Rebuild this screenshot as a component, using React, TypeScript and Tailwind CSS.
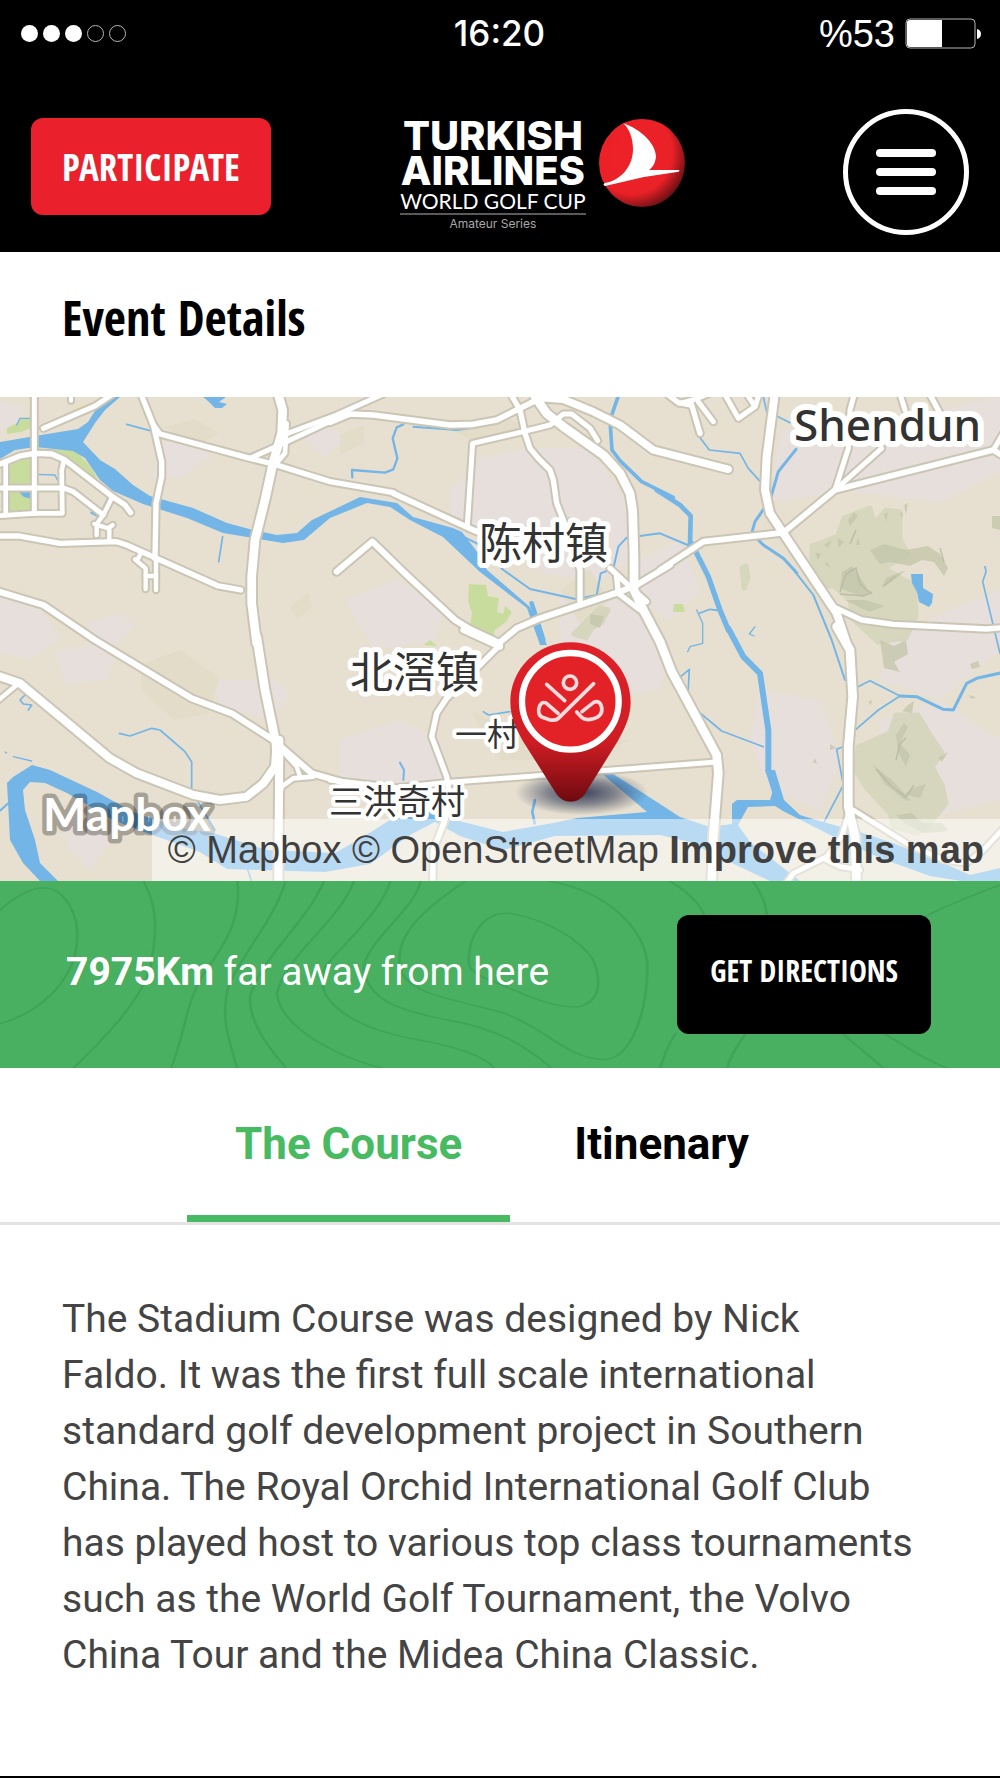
const condensed = "font-['Open_Sans_Condensed','Roboto_Condensed',Roboto,sans-serif] font-bold";

type Tile = "a" | "b" | "c" | "d" | "e" | "f";
type Line = [Tile, number, string];

// The map is stored as six tiles, drawn at three units to the pixel.
const origin: Record<Tile, string> = {
  a: "translate(0 390) scale(.33333)",
  b: "translate(330 390) scale(.33333)",
  c: "translate(660 390) scale(.33333)",
  d: "translate(0 630) scale(.33333)",
  e: "translate(330 630) scale(.33333)",
  f: "translate(660 630) scale(.33333)",
};

const roads: Line[] = [
  ["a", 13, "103,0 103,370"],
  ["a", 14, "0,222 60,198 105,190 155,192 195,210 340,322 375,345 392,368"],
  ["a", 13, "0,294 190,294 220,305 310,375"],
  ["a", 12, "17,220 17,370"],
  ["a", 12, "0,377 105,370 187,370 185,240 192,212"],
  ["a", 14, "-20,438 55,438 180,460 350,455 380,465 655,588 722,600"],
  ["a", 11, "335,325 310,375 290,402 290,435"],
  ["a", 11, "283,402 325,415 338,405"],
  ["a", 11, "328,412 328,450"],
  ["a", 11, "425,485 412,510 405,508 437,535 437,597"],
  ["a", 11, "468,510 468,600"],
  ["a", 11, "437,558 468,558"],
  ["a", 14, "420,5 460,105 485,215 485,260 468,340 465,505"],
  ["a", 13, "130,115 285,48 335,15"],
  ["a", 10, "213,0 213,32"],
  ["a", 14, "460,105 480,132 750,205 830,225 990,275 1180,308"],
  ["a", 24, "828,-10 848,60 845,130 820,215 795,330 765,450 755,560 755,640 770,760"],
  ["a", 13, "750,205 850,160 1020,80"],
  ["a", 13, "850,135 1010,75 1150,12"],
  ["a", 12, "860,100 855,190 825,225"],
  ["b", 15, "0,97 60,72 130,75 360,105 430,103 500,90 560,60 620,30 700,5"],
  ["b", 16, "20,545 127,455 230,555 375,690 420,718 510,760"],
  ["b", 16, "500,765 560,715 630,685 870,605 920,585 1020,525"],
  ["b", 15, "190,310 430,420 480,440"],
  ["b", 14, "535,0 570,60 585,130 600,175 625,205 660,240 670,270 680,340 700,390 750,540 750,635"],
  ["b", 13, "412,405 428,160 580,125 660,105 700,72 725,72 780,115 803,152"],
  ["b", 24, "615,20 650,70 700,110 820,195 870,250 900,310 908,360 912,500 912,600 940,660 990,755"],
  ["b", 20, "620,22 700,28 790,65 870,105 930,150 970,180 1195,238"],
  ["b", 14, "840,535 900,590 950,635"],
  ["b", 14, "860,560 865,610 930,660"],
  ["c", 15, "0,540 130,455 370,428 525,300 1000,180 1040,205"],
  ["c", 13, "525,300 565,175 570,60 585,5"],
  ["c", 13, "525,300 665,175"],
  ["c", 13, "1000,180 1030,130"],
  ["c", 13, "735,60 718,5"],
  ["c", 14, "805,5 840,70"],
  ["c", 14, "25,15 55,38 95,45 120,130"],
  ["c", 13, "60,40 100,30 160,5"],
  ["c", 13, "115,35 160,95"],
  ["c", 13, "190,5 235,85 285,50 300,5"],
  ["c", 12, "255,5 285,50"],
  ["c", 22, "345,5 320,200 315,300 330,370 370,430 530,670 560,760"],
  ["c", 14, "530,655 605,690 700,703 980,717 1040,712"],
  ["d", 16, "-20,-120 130,-75 285,30 575,205 695,250 820,330 935,430 1040,460"],
  ["d", 22, "-20,133 60,160 330,385 410,430 580,495 660,510 740,500 790,460 825,410 830,340"],
  ["d", 24, "770,20 795,180 828,340 832,420"],
  ["d", 22, "838,330 835,760"],
  ["d", 12, "835,520 845,470 880,445 940,440"],
  ["d", 11, "-10,215 50,165"],
  ["d", 11, "845,360 890,410 900,440"],
  ["e", 13, "0,450 200,473 360,457 1160,396"],
  ["e", 16, "400,0 510,50"],
  ["e", 14, "510,45 350,205 320,250 305,320 350,440 360,500 345,570 310,660 308,760"],
  ["e", 24, "990,35 1025,125 1160,375 1165,430 1150,620 1145,760"],
  ["f", 24, "530,-10 570,60 578,200 565,350 565,530 585,620 590,760"],
  ["f", 12, "580,540 740,640 850,690 920,700 970,660 1040,585"],
  ["f", 12, "565,550 545,620 500,680 400,730 375,765"],
  ["f", 12, "490,685 540,710 600,720"],
];

const streams: Line[] = [
  ["a", 5, "380,103 450,122"],
  ["a", 5, "668,440 656,515"],
  ["a", 4, "50,105 60,85 90,85"],
  ["a", 4, "110,253 165,255 172,270"],
  ["a", 8, "325,325 298,380 275,368"],
  ["a", 5, "745,195 815,165"],
  ["b", 7, "220,103 200,112 188,145 202,205 190,238 165,248 66,240 67,262"],
  ["b", 6, "250,110 380,120 440,112 560,65"],
  ["b", 11, "866,15 840,90 846,180 870,212 935,275 1030,322"],
  ["b", 6, "370,425 440,460 520,540 600,597 740,628 800,615 812,550 850,535 865,470 890,443 990,430 1080,468"],
  ["c", 14, "-10,300 60,345 92,378 90,465"],
  ["c", 16, "95,460 145,560 180,660 205,720"],
  ["c", 5, "25,20 45,45 95,55 110,130 148,180 240,190 265,235 298,272"],
  ["c", 9, "408,178 355,245 330,330 285,395 275,430 310,465 370,505 410,548"],
  ["c", 6, "405,545 460,615 515,750 555,870"],
  ["c", 5, "310,20 320,65 350,78 390,98"],
  ["c", 5, "975,530 978,545 968,575 1020,790"],
  ["c", 4, "110,660 128,700 128,760 90,770 83,785"],
  ["c", 5, "118,670 150,658 180,662"],
  ["c", 4, "285,710 268,732 282,738"],
  ["d", 5, "358,310 390,318 455,295 480,300 555,365 575,395 575,485 645,600"],
  ["d", 4, "15,366 20,369"],
  ["d", 4, "40,380 95,393"],
  ["d", 5, "75,195 60,210 70,222 95,225 85,240"],
  ["d", 6, "0,542 25,520"],
  ["d", 5, "740,710 755,755"],
  ["e", 14, "605,-80 640,30"],
  ["e", 8, "615,510 607,545 614,580"],
  ["e", 5, "460,245 475,255 540,245"],
  ["e", 6, "210,398 222,420 220,450"],
  ["f", 18, "205,-5 250,80 300,130 325,300 325,420 350,500"],
  ["f", 5, "38,160 88,118 84,190"],
  ["f", 5, "100,232 185,303 310,350"],
  ["f", 5, "585,175 630,152 720,198 655,240 580,305"],
  ["f", 9, "720,198 770,200 850,238 880,240 920,160 950,145 1040,125"],
  ["f", 5, "555,348 530,358 550,465 490,580"],
];

function Lines({ items, extra }: { items: Line[]; extra: number }) {
  return (
    <g fill="none" strokeLinecap="round" strokeLinejoin="round">
      {items.map(([tile, width, points], i) => (
        <polyline key={i} transform={origin[tile]} strokeWidth={width + extra} points={points} />
      ))}
    </g>
  );
}

function Terrain() {
  return (
    <g>
      <g fill="#e7dfdb">
        <path d="M0 402l25 4-10 20-15 4zM160 445l30-10 20 20-28 22-30 2zM300 432l24-12 20 20-20 18zM0 595l40 14 20 30-30 20-30-6zM90 622l30-8 15 12-20 20-30 6zM55 650l40-4 20 14-10 20-40 4z" />
        <path d="M470 460l60-12 60 0 40 60 4 50-30 22-60-6-50-40-30-40zM450 490l30-30 40 30-20 30-50 20zM345 600l50-20 50 20-10 40-60 10zM560 590l60 10 50 40-10 50-70 10-30-50z" />
        <path d="M780 430l110-10 110-23v75l-60 30-90-10-80 10zM890 640l60-30 50-20v60l-60 50-60-20zM760 690l60 10 20 60-20 50-50-20-20-50zM880 720l60-20 60 40v60l-80 20-40-30zM640 560l40-20 20 50-30 30-30-20zM340 740l60-20 40 20 10 40-80 30-30-30zM60 820l30-10 20 30-20 30-20-20zM215 680l60 0 15 15-20 25-50-14z" />
      </g>
      <g fill="#e2dcc8">
        <path d="M140 665l40-15 40 28-12 36-34 6-32-30zM165 427l30-8 24 14-24 14zM290 607l18-14 4 14-14 12zM450 430l60-10 30 10-60 14zM340 435l24-10 0 18-24 12zM470 710l60 30 100 0-50 20-80 0zM560 590l30-20 20 30-30 24z" />
      </g>
      <g fill="#c8dd9d">
        <path d="M7 428l10-5 4-5 10 0v10l-10 4-14 2zM8 462l24-9v32H8zM9 491h23v19l-23 1zM33 448l42 2 15 16 12 20-20-14-20-14-29-1zM469 584l17 1 2 11 11 2-2 14 6 2 2-8 7 6-6 10-11 8-2 8-13-3-10-8 2-14-4-12zM424 645l6-5 7 6zM674 604l9 0 2 8-12 0zM568 517l6 1v4h-6z" />
      </g>
      <path d="M72 408l20-6 14-4-4 6-24 8z" fill="#ebe2b4" />
      <g fill="#d2d5b8" stroke="#d2d5b8" strokeWidth="5" strokeLinejoin="round" opacity=".8">
        <path d="M812 546l26-10 6-18 26-10 4 16 12-14 14 2 0 28 8 14-24 14 20 12 10 4 2 32-10 22-28 4-24-22-4-20-16-14-10 0-12-16z" />
        <path d="M858 747l32-14 6-18 22 0 12 20 12 18-10 14 10 18 4 18-14 18-14 12-24-6-4-14-24-26-10-16z" />
        <path d="M574 634l18-18 8-8 8 2-6 12-10 6-6 10zM742 568l4-2 2 12-4 10z" />
      </g>
      <g fill="#c3c6aa" opacity=".75">
        <path d="M842 572l10-6 10 14 8 14-10 2-20-8zM854 512l4 4-8 10-2-6zM884 514l4-2-2 10zM838 538l6 4-6 6zM870 550l14-6 22 6 22-4 12 8 8 14-4 8-10-14-12-2-12 6-20-4-10 2zM906 570l-10 8-14 10 4-10zM845 600l20 0 20 6-16 6zM896 735l8-12 4 4-8 16 10 12-4 12-8-16zM873 765l20 16 18 20-6-1-20-16zM914 788l12-4-6 14-16-4zM938 758l10-6-6 10zM896 815l16-2 10 10 20 0 6 8-24 2-20-10zM880 640l14 6 12-6 2 14-14 8 6 10-16-4zM590 614l14 2-4 12-10-4zM908 705l6-4-2 12-10-2zM992 516l8 0v14l-8-2z" />
        <path d="M824 545l8-5-4 8zM904 505l4-2-2 12zM900 512l3 1-1 6zM815 552l6 2-3 6zM856 545l2-8 2 8zM876 556l10-4-12 8zM827 562l4 6-6-4zM970 664l8-3 2 6-8 2zM976 697l-8-2 4 4zM868 702l4-2-1 5zM813 762l2-4 2 6zM894 576l6-4-10 10zM830 744l6 4-6 2z" />
      </g>
      <g fill="none" stroke="#b5b8a4" strokeWidth="1.5" opacity=".8">
        <path d="M840 592l6-18 10-6 4 16 12 10M840 594l24 2 8-4M876 769l14 16 16 12 8-12M896 760l4-16 6-6M856 530l-6 14M884 586l12-10M940 548l4 14" />
      </g>
    </g>
  );
}

function Water() {
  return (
    <g fill="#73b5e6">
      <path d="M0 442L35 436 78 429 88 422 100 403 107 397H120L105 410 95 423 83 442 100 460 115 469 133 485 150 496 193 508 227 523 253 530 277 535 297 533 312 520 360 497 397 503 413 517 453 528 462 532 478 553 487 570 530 607 547 645 540 645 527 608 480 572 443 537 410 520 390 507 367 503 330 518 304 540 283 543 253 538 223 533 187 518 143 504 113 491 100 480 85 458 73 451 35 447 15 450 0 459z" />
      <path d="M7 783L13 777 32 765 50 770 97 792 133 812 180 828 213 833 267 850 335 853 363 837 390 820 430 812 463 822 503 832 553 823 577 818 647 812 600 772 610 772 643 793 680 817 710 827 732 824V804L737 800 770 800 773 790 765 770 775 770 784 800 800 815 823 822 860 832 893 843 943 863 970 875 1000 868V884H980L930 876 880 858 830 835 783 811 775 806 748 807 738 825 750 842 800 881H770L715 855 690 842 660 835 555 836 503 850 460 836 435 822 410 835 370 864 325 872 227 869 200 852 147 833 113 820 67 793 45 783 30 782 23 790 25 810 35 840 40 863 58 881H40L23 863 10 840z" />
      <path d="M203 397H226L219 402 227 404 222 408 215 408 208 401zM911 574H923V588L933 594 932 603 929 607 919 602 917 592 912 583zM18 491l14 0v8l-8-2z" />
    </g>
  );
}

function Pin() {
  return (
    <g transform={origin.e}>
      <defs>
        <linearGradient id="pin" x1="0" y1="0" x2="0" y2="1">
          <stop offset="0" stopColor="#e0212a" />
          <stop offset=".62" stopColor="#cf1d24" />
          <stop offset="1" stopColor="#6d0a0f" />
        </linearGradient>
        <radialGradient id="shade">
          <stop offset="0" stopColor="#1c2748" stopOpacity=".85" />
          <stop offset=".5" stopColor="#1c2748" stopOpacity=".5" />
          <stop offset="1" stopColor="#1c2748" stopOpacity="0" />
        </radialGradient>
      </defs>
      <ellipse cx="755" cy="488" rx="200" ry="68" fill="url(#shade)" />
      <path
        d="M722 37C822 37 902 117 902 217C902 262 882 300 864 332L768 487C745 525 699 525 676 487L578 332C560 300 541 262 541 217C541 117 622 37 722 37Z"
        fill="url(#pin)"
      />
      <circle cx="721" cy="214" r="145" fill="#e32228" stroke="#fff" strokeWidth="19" />
      <g fill="none" stroke="#fbdcdd" strokeWidth="11" strokeLinecap="round" strokeLinejoin="round">
        <circle cx="720" cy="158" r="20" />
        <path d="M650 163L704 212" />
        <path d="M791 161L688 262C682 270 670 272 658 269L637 262C624 257 624 240 629 228C635 215 645 215 653 223L684 250" />
        <path d="M740 246L756 263C764 270 776 270 790 266C808 261 818 250 815 232C812 216 802 211 790 218L756 245" />
      </g>
    </g>
  );
}

function MapView() {
  return (
    <svg
      viewBox="0 397 1000 484"
      preserveAspectRatio="xMidYMid slice"
      className="block aspect-[1000/484] w-full"
      role="img"
      aria-label="Map of the course location"
    >
      <rect y="397" width="1000" height="484" fill="#e7e0d0" />
      <Terrain />
      <Water />
      <g stroke="#73b5e6">
        <Lines items={streams} extra={0} />
      </g>
      <g stroke="#cac5b5">
        <Lines items={roads} extra={14} />
      </g>
      <g stroke="#fff">
        <Lines items={roads} extra={2} />
      </g>
      <g
        fill="#333"
        stroke="#fff"
        strokeLinejoin="round"
        paintOrder="stroke"
        className="font-['Noto_Sans_CJK_SC',sans-serif]"
      >
        <text x="479" y="559" fontSize="43" strokeWidth="10">陈村镇</text>
        <text x="350" y="688" fontSize="43" strokeWidth="10">北滘镇</text>
        <text x="455" y="746" fontSize="32" strokeWidth="8">一村</text>
        <text x="329" y="814" fontSize="34" strokeWidth="8">三洪奇村</text>
      </g>
      <text
        x="794"
        y="441"
        fontSize="44"
        fill="#333"
        stroke="#fff"
        strokeWidth="12"
        strokeLinejoin="round"
        paintOrder="stroke"
        className="font-['Noto_Sans',sans-serif] font-medium"
      >
        Shendun
      </text>
      <Pin />
      <text
        x="43"
        y="831"
        fontSize="46"
        fill="#fff"
        stroke="#000"
        strokeOpacity=".28"
        strokeWidth="9"
        strokeLinejoin="round"
        paintOrder="stroke"
        className="font-[Lato,sans-serif] font-bold"
      >
        Mapbox
      </text>
    </svg>
  );
}

function Emblem() {
  return (
    <svg viewBox="0 0 88 90" className="w-[88px] shrink-0" aria-hidden="true">
      <defs>
        <radialGradient id="ball" cx=".38" cy=".38" r=".66">
          <stop offset="0" stopColor="#ed2228" />
          <stop offset=".72" stopColor="#ea2127" />
          <stop offset="1" stopColor="#6f1114" />
        </radialGradient>
      </defs>
      <ellipse cx="44" cy="45" rx="43" ry="44" fill="url(#ball)" />
      <path
        d="M25 5C44 12 58 26 58 39C57 46 54 50 51 52L81 52C82 53 81 54 79 54L46 59L7 68C5 67 5 66 7 65C21 63 35 50 35 31C35 20 31 10 25 5Z"
        fill="#fff"
      />
    </svg>
  );
}

function Contours() {
  return (
    <svg
      viewBox="0 33 1568 562"
      preserveAspectRatio="none"
      className="absolute inset-0 size-full"
      fill="none"
      stroke="#3fa358"
      strokeWidth="4"
      aria-hidden="true"
    >
      <path d="M0 120C30 70 60 40 85 60C115 90 125 170 120 230C112 340 60 430 0 462" />
      <path d="M225 33C250 120 245 200 235 300C215 410 160 510 115 595" />
      <path d="M372 33C380 150 350 230 320 310C290 400 290 500 268 595" />
      <path d="M448 33C430 150 380 250 358 350C345 440 360 520 372 595" />
      <path d="M508 33C480 160 410 260 392 380C390 470 430 550 448 595" />
      <path d="M555 33C530 160 450 250 434 370C440 480 540 570 600 595" />
      <path d="M612 33C600 120 540 220 510 290C490 370 530 460 640 505C720 530 760 560 775 595" />
      <path d="M660 33C650 120 570 220 570 300C580 390 620 420 700 450C790 480 830 540 865 595" />
      <path d="M730 33C670 110 610 200 630 310C650 380 720 390 790 430C860 480 890 570 950 570C990 560 1015 430 1015 290C1015 180 950 60 860 33" />
      <path d="M735 270C735 190 760 125 800 130C860 150 910 210 930 270C945 340 940 400 905 412C850 410 810 360 760 325C735 300 735 290 735 270Z" />
      <path d="M1050 33C1090 80 1100 110 1110 160M1180 33C1195 70 1200 100 1203 140M1568 45C1520 80 1480 110 1450 140" />
      <path d="M1060 490C1045 530 1040 570 1035 595M1170 490C1155 530 1145 560 1140 595M1320 490C1345 530 1370 570 1385 595M1385 490C1420 530 1450 570 1485 595" />
    </svg>
  );
}

const description = [
  "The Stadium Course was designed by Nick",
  "Faldo. It was the first full scale international",
  "standard golf development project in Southern",
  "China. The Royal Orchid International Golf Club",
  "has played host to various top class tournaments",
  "such as the World Golf Tournament, the Volvo",
  "China Tour and the Midea China Classic.",
];

export default function App() {
  return (
    <div className="flex min-h-screen flex-col border-b-2 border-black bg-white font-[Roboto,sans-serif] text-black">
      <header className="bg-black pb-[17px] text-white">
        <div className="grid h-[67px] grid-cols-3 items-center pr-[18px] pl-[21px]">
          <div className="flex gap-[5px]" role="img" aria-label="Signal: 3 of 5">
            <i className="size-[17px] rounded-full bg-white" />
            <i className="size-[17px] rounded-full bg-white" />
            <i className="size-[17px] rounded-full bg-white" />
            <i className="size-[17px] rounded-full border border-[#b5b5b5]" />
            <i className="size-[17px] rounded-full border border-[#b5b5b5]" />
          </div>
          <time className="pr-1 text-center font-[Inter,sans-serif] text-[35px] leading-none font-medium">16:20</time>
          <div className="flex items-center justify-end gap-[10px]">
            <span className="font-['Liberation_Sans',Arial,sans-serif] text-[38px] leading-none">%53</span>
            <svg viewBox="0 0 77 32" className="w-[77px]" aria-hidden="true">
              <rect x="1" y="1" width="69" height="29" rx="4" fill="none" stroke="#b5b5b5" />
              <path d="M5 2H37V29H5Q2 29 2 26V5Q2 2 5 2ZM72 11Q76 12 76 16T72 21Z" fill="#fff" />
            </svg>
          </div>
        </div>

        <div className="flex items-start justify-between px-[31px] pt-[42px]">
          <button className={`${condensed} mt-[9px] h-[97px] rounded-xl bg-[#ea212c] px-[31px] text-[37px] leading-none`}>
            PARTICIPATE
          </button>
          <a href="#home" className="flex items-start gap-3 pt-[9px] pr-7">
            <span className="flex flex-col items-center font-[Inter,sans-serif]">
              <span className="text-[40px] leading-[35px] font-extrabold">TURKISH</span>
              <span className="text-[40px] leading-[35px] font-extrabold">AIRLINES</span>
              <span className="font-[Lato,sans-serif] text-[21px] leading-[25px]">WORLD GOLF CUP</span>
              <span className="w-full border-t-2 border-[#5a5a5a] pt-[2px] text-center text-[12px] leading-[14px] text-[#a8a8a8]">
                Amateur Series
              </span>
            </span>
            <Emblem />
          </a>
          <button
            aria-label="Menu"
            className="flex size-[126px] flex-col items-center justify-center gap-[11px] rounded-full border-[5px] border-white"
          >
            <i className="h-2 w-[60px] rounded-full bg-white" />
            <i className="h-2 w-[60px] rounded-full bg-white" />
            <i className="h-2 w-[60px] rounded-full bg-white" />
          </button>
        </div>
      </header>

      <h1 className={`${condensed} px-[62px] pt-[30px] pb-[43px] text-[48px] leading-[72px]`}>Event Details</h1>

      <section className="relative">
        <MapView />
        <p className="absolute right-0 bottom-0 bg-white/50 pr-4 pl-4 font-['Liberation_Sans',Arial,sans-serif] text-[38px] leading-[62px] whitespace-nowrap text-[#404040]">
          © Mapbox © OpenStreetMap{" "}
          <a href="#improve" className="font-bold">
            Improve this map
          </a>
        </p>
      </section>

      <section className="relative bg-[#48b060] text-white">
        <Contours />
        <div className="relative flex items-center justify-between py-[34px] pr-[69px] pl-[66px]">
          <p className="pb-1 text-[39px] leading-none">
            <b className="font-bold">7975Km</b> far away from here
          </p>
          <button className={`${condensed} h-[119px] rounded-xl bg-black px-[33px] pb-2 text-[30px] leading-none`}>
            GET DIRECTIONS
          </button>
        </div>
      </section>

      <nav className="flex justify-center gap-4 border-b-[3px] border-[#e3e3e3] pr-4 text-[44px] font-bold" role="tablist">
        <button role="tab" aria-selected="true" className="border-b-[7px] border-[#48bb62] px-12 pt-[46px] pb-[41px] leading-[60px] text-[#48bb62]">
          The Course
        </button>
        <button role="tab" aria-selected="false" className="border-b-[7px] border-transparent px-12 pt-[46px] pb-[41px] leading-[60px]">
          Itinenary
        </button>
      </nav>

      <p className="px-[62px] pt-[66px] pb-20 text-[39px] leading-[56px] text-[#444]">
        {description.map((line) => (
          <span key={line} className="block">
            {line}
          </span>
        ))}
      </p>
    </div>
  );
}
